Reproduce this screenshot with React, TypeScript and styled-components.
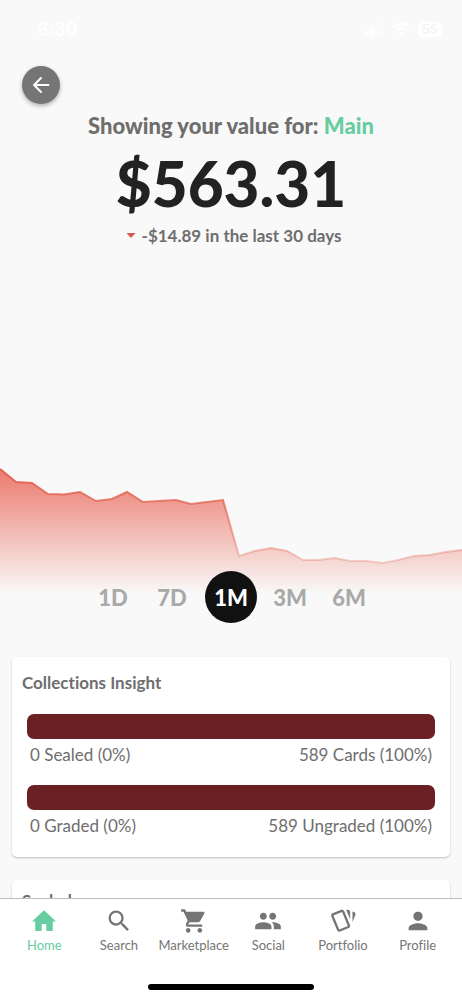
import React from "react";
import styled, { createGlobalStyle } from "styled-components";

const Global = createGlobalStyle`
  * { box-sizing: border-box; }
  body { margin: 0; background: #f9f9f9; font-family: Lato, "Open Sans", sans-serif; font-variant-ligatures: none; color: #6e6e6e; }
  button { font: inherit; border: 0; padding: 0; background: none; cursor: pointer; }
  h1, h2, p { margin: 0; }
`;

const Screen = styled.div`
  height: 100vh;
  display: flex;
  flex-direction: column;
  overflow: hidden;
`;
const StatusBar = styled.div`
  display: flex;
  flex: none;
  justify-content: space-between;
  align-items: center;
  height: 58px;
  padding: 0 20px 0 37px;
  color: #fff;
  font: 600 18px Inter, sans-serif;
`;
const StatusIcons = styled.div`
  display: flex;
  align-items: center;
  gap: 8px;
`;
const Battery = styled.span`
  background: #fff;
  color: #f4f4f4;
  border-radius: 5px;
  padding: 0 4px;
  font-size: 13px;
  line-height: 15px;
`;
const Content = styled.main`
  flex: 1;
  min-height: 0;
  overflow: hidden;
`;
const BackButton = styled.button`
  && {
    display: grid;
    place-items: center;
    width: 38px;
    height: 38px;
    margin: 8px 0 0 22px;
    border-radius: 50%;
    background: #757575;
    box-shadow: 0 2px 4px rgba(0, 0, 0, 0.3);
  }
`;
const Summary = styled.header`
  display: flex;
  flex-direction: column;
  align-items: center;
`;
const Title = styled.h1`
  margin: 8px 0 0;
  font-size: 22px;
  line-height: 28px;
  font-weight: 900;
`;
const Accent = styled.span`
  color: #66cda0;
`;
const Amount = styled.p`
  font-size: 62px;
  line-height: 87px;
  font-weight: 900;
  color: #222;
`;
const Change = styled.p`
  display: flex;
  align-items: center;
  gap: 6px;
  padding-left: 5px;
  font-size: 17px;
  line-height: 18px;
  font-weight: 700;
`;
const Chart = styled.svg`
  display: block;
  width: 100%;
  height: 140px;
  margin-top: 215px;
`;
const Ranges = styled.div`
  position: relative;
  display: flex;
  justify-content: center;
  gap: 7px;
  margin-top: -29px;
`;
const Range = styled.button<{ $active?: boolean }>`
  && {
    width: 52px;
    height: 52px;
    border-radius: 50%;
    font-size: 22px;
    font-weight: 900;
    color: ${(p) => (p.$active ? "#fff" : "#a9a9a9")};
    background: ${(p) => (p.$active ? "#111" : "transparent")};
  }
`;
const Card = styled.section`
  margin: 34px 12px 0;
  padding: 12px 15px 19px;
  background: #fff;
  border-radius: 5px;
  box-shadow: 0 1px 2px rgba(0, 0, 0, 0.25);

  & + & {
    margin-top: 23px;
    padding-top: 7px;
  }
`;
const CardTitle = styled.h2`
  margin-left: -5px;
  font-size: 17px;
  line-height: 27px;
  font-weight: 700;
`;
const Insight = styled.div`
  margin-top: 18px;
`;
const Bar = styled.div`
  height: 25px;
  border-radius: 7px;
  background: #6b2123;
`;
const Legend = styled.div`
  display: flex;
  justify-content: space-between;
  padding: 4px 3px 0;
  font-size: 17px;
  line-height: 24px;
`;
const Footer = styled.footer`
  position: relative;
  flex: none;
  background: #fff;
  border-top: 1px solid #bdbdbd;
`;
const Tabs = styled.nav`
  display: grid;
  grid-template-columns: repeat(6, minmax(0, 1fr));
  padding: 8px 7px 0;
`;
const Tab = styled.a<{ $active?: boolean }>`
  display: flex;
  flex-direction: column;
  align-items: center;
  gap: 2px;
  color: ${(p) => (p.$active ? "#66cda0" : "#757575")};
  font-size: 13px;
  line-height: 16px;
  text-decoration: none;
`;
const HomeIndicator = styled.div`
  width: 36%;
  height: 6px;
  margin: 31px auto 10px;
  border-radius: 3px;
  background: #000;
`;

const tabs = [
  { label: "Home", path: "M10,20.500V14.500H14V20.500H19.500V12.500H22.300L12,2.700L1.700,12.500H4.500V20.500H10Z" },
  { label: "Search", path: "M15.5 14h-.79l-.28-.27A6.47 6.47 0 0 0 16 9.5 6.5 6.5 0 1 0 9.5 16c1.61 0 3.09-.59 4.23-1.57l.27.28v.79l5 4.99L20.49 19l-4.99-5zm-6 0C7.01 14 5 11.99 5 9.5S7.01 5 9.5 5 14 7.01 14 9.5 11.99 14 9.5 14z" },
  { label: "Marketplace", path: "M7 18c-1.1 0-1.99.9-1.99 2S5.9 22 7 22s2-.9 2-2-.9-2-2-2zM1 2v2h2l3.6 7.59-1.35 2.45c-.16.28-.25.61-.25.96 0 1.1.9 2 2 2h12v-2H7.42c-.14 0-.25-.11-.25-.25l.03-.12.9-1.63h7.45c.75 0 1.41-.41 1.75-1.03l3.58-6.49A1 1 0 0 0 20 4H5.21l-.94-2H1zm16 16c-1.1 0-1.99.9-1.99 2s.89 2 1.99 2 2-.9 2-2-.9-2-2-2z" },
  { label: "Social", path: "M16 11c1.66 0 2.99-1.34 2.99-3S17.66 5 16 5s-3 1.34-3 3 1.34 3 3 3zm-8 0c1.66 0 2.99-1.34 2.99-3S9.66 5 8 5 5 6.34 5 8s1.34 3 3 3zm0 2c-2.33 0-7 1.17-7 3.5V19h14v-2.5c0-2.33-4.67-3.5-7-3.5zm8 0c-.29 0-.62.02-.97.05 1.16.84 1.97 1.97 1.97 3.45V19h6v-2.5c0-2.33-4.67-3.5-7-3.5z" },
  { label: "Portfolio", path: "M11.19,2.25C10.93,2.25 10.67,2.31 10.42,2.4L3.06,5.45C2.04,5.87 1.55,7.04 1.97,8.05L6.93,20C7.24,20.77 7.97,21.23 8.74,21.25C9,21.25 9.27,21.22 9.54,21.1L16.91,18.05C17.65,17.74 18.11,17 18.13,16.25C18.14,16 18.09,15.71 18,15.45L13,3.5C12.71,2.73 11.97,2.26 11.19,2.25M14.67,2.25L18.12,10.6V4.25A2,2 0 0,0 16.12,2.25M20.13,3.79V12.82L22.56,6.96C22.97,5.94 22.5,4.78 21.47,4.36M11.19,4.22L16.17,16.24L8.78,19.3L3.8,7.29" },
  { label: "Profile", path: "M12 12c2.21 0 4-1.79 4-4s-1.79-4-4-4-4 1.79-4 4 1.79 4 4 4zm0 2c-2.67 0-8 1.34-8 4v2h16v-2c0-2.66-5.33-4-8-4z" },
];

const ranges = ["1D", "7D", "1M", "3M", "6M"];

const insights = [
  { left: "0 Sealed (0%)", right: "589 Cards (100%)" },
  { left: "0 Graded (0%)", right: "589 Ungraded (100%)" },
];

const line =
  "0,9 16,22 32,23 48,34 64,34.500 80,32 96,41 112,39 127,32 143,42 159,41 176,40 191,44 207,42 223,40 239,96 255,91 271,88 287,91 303,100 319,100 335,98 350,101 366,101 383,103 398,100 414,96 430,95 446,92 462,90";

export default function App() {
  return (
    <Screen>
      <Global />
      <StatusBar>
        <span>6:30</span>
        <StatusIcons>
          <svg width="20" height="13" viewBox="0 0 20 13" fill="#fff">
            <rect x="0" y="8" width="4" height="5" rx="1" />
            <rect x="5" y="5" width="4" height="8" rx="1" />
            <rect x="10" y="3" width="4" height="10" rx="1" opacity=".4" />
            <rect x="15" y="0" width="4" height="13" rx="1" opacity=".4" />
          </svg>
          <svg width="18" height="14" viewBox="0 0 18 14" fill="none" stroke="#fff" strokeWidth="2.500">
            <path d="M1 5a11.500 11.500 0 0 1 16 0M4 8.500a7 7 0 0 1 10 0" />
            <path d="M9 14l-2.500-3a4 4 0 0 1 5 0z" fill="#fff" stroke="none" />
          </svg>
          <Battery>55</Battery>
        </StatusIcons>
      </StatusBar>
      <Content>
        <BackButton aria-label="Back">
          <svg width="18" height="18" viewBox="0 0 18 18" fill="none" stroke="#fff" strokeWidth="2" strokeLinecap="round" strokeLinejoin="round">
            <path d="M16.500 9H2M9 2L2 9l7 7" />
          </svg>
        </BackButton>
        <Summary>
          <Title>
            Showing your value for: <Accent>Main</Accent>
          </Title>
          <Amount>$563.31</Amount>
          <Change>
            <svg width="10" height="6" viewBox="0 0 10 6" fill="#d75a4a">
              <path d="M.5 0h9L5 5z" />
            </svg>
            -$14.89 in the last 30 days
          </Change>
        </Summary>
        <Chart viewBox="0 0 462 140" preserveAspectRatio="none" role="img" aria-label="Value over the last month">
          <defs>
            <linearGradient id="area" gradientUnits="userSpaceOnUse" x1="0" y1="10" x2="0" y2="134">
              <stop offset="0" stopColor="#e8604f" stopOpacity=".82" />
              <stop offset="1" stopColor="#e8604f" stopOpacity="0" />
            </linearGradient>
            <linearGradient id="stroke" gradientUnits="userSpaceOnUse" x1="0" y1="10" x2="0" y2="134">
              <stop offset="0" stopColor="#e2604f" />
              <stop offset="1" stopColor="#e2604f" stopOpacity="0" />
            </linearGradient>
          </defs>
          <polygon points={`0,140 ${line} 462,140`} fill="url(#area)" />
          <polyline points={line} fill="none" stroke="url(#stroke)" strokeWidth="2" />
        </Chart>
        <Ranges>
          {ranges.map((r) => (
            <Range key={r} $active={r === "1M"}>{r}</Range>
          ))}
        </Ranges>
        <Card>
          <CardTitle>Collections Insight</CardTitle>
          {insights.map((i) => (
            <Insight key={i.left}>
              <Bar />
              <Legend>
                <span>{i.left}</span>
                <span>{i.right}</span>
              </Legend>
            </Insight>
          ))}
        </Card>
        <Card>
          <CardTitle>Sealed</CardTitle>
        </Card>
      </Content>
      <Footer>
        <Tabs>
          {tabs.map((t) => (
            <Tab key={t.label} href="#" $active={t.label === "Home"}>
              <svg width="28" height="28" viewBox="0 0 24 24" fill="currentColor" fillRule="evenodd">
                <path d={t.path} />
              </svg>
              {t.label}
            </Tab>
          ))}
        </Tabs>
        <HomeIndicator />
      </Footer>
    </Screen>
  );
}
